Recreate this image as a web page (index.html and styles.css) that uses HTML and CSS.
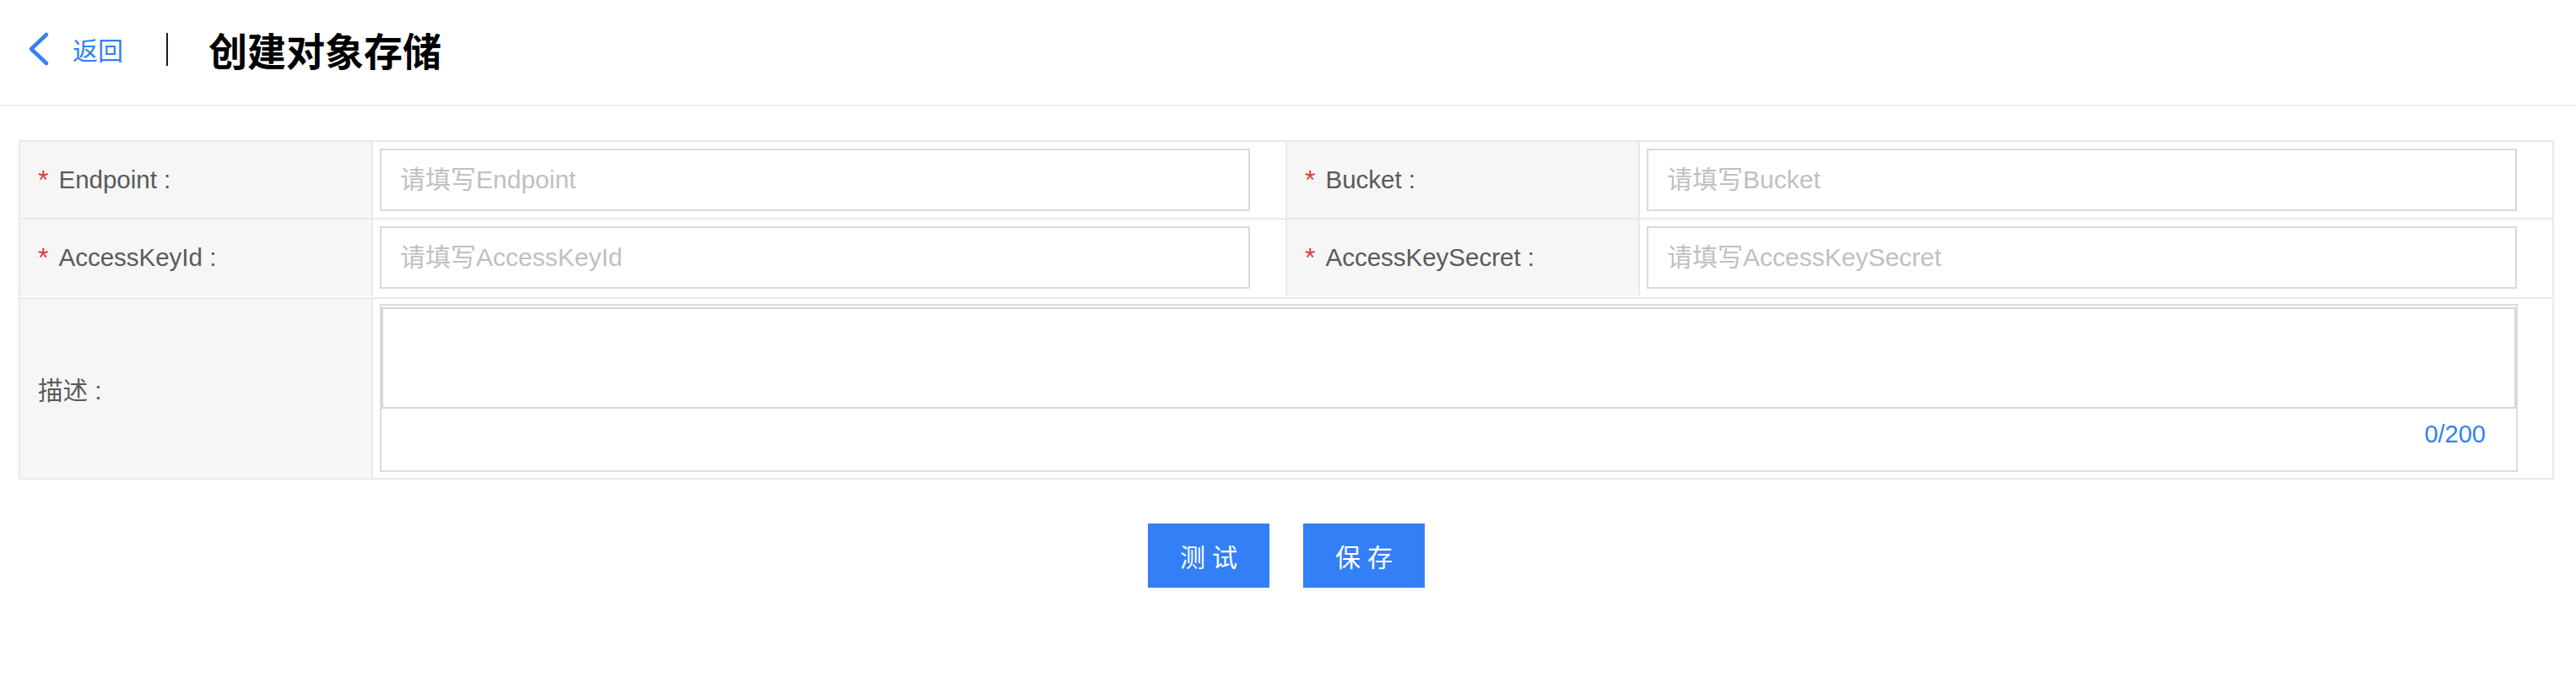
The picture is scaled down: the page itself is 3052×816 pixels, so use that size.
FILE: index.html
```html
<!DOCTYPE html>
<html lang="zh-CN">
<head>
<meta charset="utf-8">
<title>创建对象存储</title>
<link rel="stylesheet" href="styles.css">
</head>
<body>
<header class="header">
  <a class="back" href="#">
    <svg class="back-icon" width="26" height="42" viewBox="0 0 26 42" aria-hidden="true">
      <polyline points="22,4 4,21 22,38" fill="none" stroke="#3480f6" stroke-width="4.5" stroke-linecap="round" stroke-linejoin="round"/>
    </svg>
    <span class="back-text">返回</span>
  </a>
  <span class="divider"></span>
  <h1 class="title">创建对象存储</h1>
</header>

<main class="content">
  <div class="form-box form-box-top">
    <div class="row">
      <div class="label-cell"><span class="req">*</span>Endpoint :</div>
      <div class="input-cell"><input class="text-input" type="text" placeholder="请填写Endpoint"></div>
      <div class="label-cell"><span class="req">*</span>Bucket :</div>
      <div class="input-cell"><input class="text-input" type="text" placeholder="请填写Bucket"></div>
    </div>
    <div class="row row-last">
      <div class="label-cell"><span class="req">*</span>AccessKeyId :</div>
      <div class="input-cell"><input class="text-input" type="text" placeholder="请填写AccessKeyId"></div>
      <div class="label-cell"><span class="req">*</span>AccessKeySecret :</div>
      <div class="input-cell"><input class="text-input" type="text" placeholder="请填写AccessKeySecret"></div>
    </div>
  </div>

  <div class="form-box form-box-bottom">
    <div class="row row-desc">
      <div class="label-cell">描述 :</div>
      <div class="input-cell textarea-cell">
        <div class="textarea-wrap">
          <textarea class="textarea"></textarea>
          <div class="counter">0/200</div>
        </div>
      </div>
    </div>
  </div>

  <div class="actions">
    <button class="btn" type="button">测试</button>
    <button class="btn" type="button">保存</button>
  </div>
</main>
</body>
</html>
```

FILE: styles.css
```css
* {
  box-sizing: border-box;
}

html, body {
  margin: 0;
  padding: 0;
  background: #ffffff;
}

body {
  font-family: "Liberation Sans", "Noto Sans CJK SC", sans-serif;
  color: #5c5c5c;
}

/* Header */
.header {
  height: 126px;
  border-bottom: 2px solid #ededed;
  display: flex;
  align-items: center;
  padding: 0 0 8px 33px;
}

.back {
  display: flex;
  align-items: center;
  text-decoration: none;
}

.back-icon {
  display: block;
}

.back-text {
  margin-left: 27px;
  font-family: "Noto Sans CJK SC", sans-serif;
  font-size: 30px;
  line-height: 40px;
  color: #3480f6;
}

.divider {
  display: block;
  width: 2px;
  height: 39px;
  margin-left: 51px;
  background: #1c1c1c;
}

.title {
  margin: 0 0 0 48px;
  font-family: "Noto Sans CJK SC", sans-serif;
  font-size: 46px;
  line-height: 56px;
  font-weight: 700;
  color: #000000;
}

/* Content */
.content {
  padding: 40px 26px 0 22px;
}

.form-box {
  border: 2px solid #e9e9e9;
}

.form-box-top {
  border-bottom: none;
}

.form-box-bottom {
  margin-top: 2px;
}

.row {
  display: grid;
  grid-template-columns: 416px 1fr 416px 1fr;
  column-gap: 2px;
  background: #e9e9e9;
  border-bottom: 2px solid #e9e9e9;
}

.row-last {
  border-bottom: none;
}

.row-desc {
  grid-template-columns: 416px 1fr;
  border-bottom: none;
}

.label-cell {
  display: flex;
  align-items: center;
  background: #f6f6f6;
  padding-left: 21px;
  font-size: 29.5px;
  color: #5a5a5a;
  white-space: nowrap;
}

.req {
  color: #e53a3a;
  font-size: 32px;
  margin-right: 12px;
}

.input-cell {
  background: #ffffff;
  padding: 8px 42px 8px 8px;
}

.text-input {
  display: block;
  width: 100%;
  height: 74px;
  border: 2px solid #d9d9d9;
  border-radius: 0;
  padding: 0 0 0 22px;
  margin: 0;
  font-family: "Liberation Sans", "Noto Sans CJK SC", sans-serif;
  font-size: 30px;
  color: #333333;
  background: #ffffff;
  outline: none;
}

.text-input::placeholder {
  color: #c0c0c0;
}

.textarea-cell {
  padding: 6px 41px 7px 8px;
}

.textarea-wrap {
  border: 2px solid #dcdcdc;
  height: 199px;
  display: flex;
  flex-direction: column;
}

.textarea {
  display: block;
  width: 100%;
  height: 120px;
  margin: 2px 0 0 0;
  border: 2px solid #d6d6d6;
  border-radius: 0;
  resize: none;
  padding: 10px 20px;
  font-family: "Liberation Sans", "Noto Sans CJK SC", sans-serif;
  font-size: 30px;
  outline: none;
  background: #ffffff;
}

.counter {
  padding: 16px 36px 0 0;
  text-align: right;
  font-size: 29px;
  line-height: 28px;
  color: #3480f6;
}

/* Actions */
.actions {
  display: flex;
  justify-content: center;
  gap: 40px;
  margin-top: 52px;
}

.btn {
  width: 144px;
  height: 76px;
  border: none;
  border-radius: 0;
  background: #337ff6;
  color: #ffffff;
  font-family: "Noto Sans CJK SC", sans-serif;
  font-size: 30px;
  letter-spacing: 8px;
  padding: 0 0 0 8px;
  cursor: pointer;
}
```
